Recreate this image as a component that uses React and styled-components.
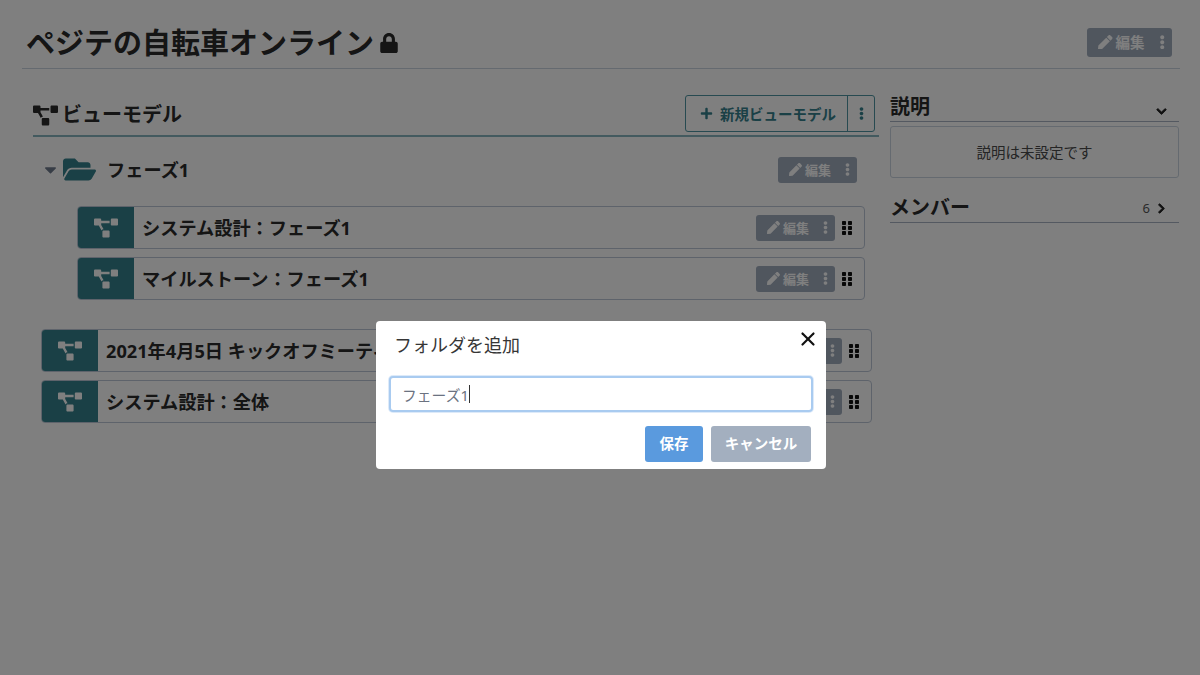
import styled, { createGlobalStyle } from 'styled-components';
import {
    FaProjectDiagram, FaLock, FaPen, FaEllipsisV, FaPlus, FaFolderOpen,
    FaCaretDown, FaGripVertical, FaChevronDown, FaChevronRight,
} from 'react-icons/fa';
import { X } from 'lucide-react';

const TEAL = '#34808c';
const TEAL_LINE = '#4f95a2';
const GRAY = '#a0acbd';

const GlobalStyle = createGlobalStyle`
    html, body {
        margin: 0;
        height: 100%;
        background: #fff;
    }
    body {
        font-family: "Noto Sans", "Noto Sans CJK JP", sans-serif;
        color: #363636;
    }
    * {
        box-sizing: border-box;
    }
`

const Page = styled.div`
    width: 1200px;
    height: 675px;
    padding: 0 20px 0 22px;
    overflow: hidden;
`

const Header = styled.header`
    height: 69px;
    display: flex;
    align-items: center;
    justify-content: space-between;
    padding: 16px 8px 0 4px;
    border-bottom: 1px solid #cbd5e0;
`

const Title = styled.h1`
    margin: 1px 0 0;
    display: flex;
    align-items: center;
    gap: 5px;
    font-size: 29px;
    font-weight: 700;
    line-height: 40px;
    color: #2a2a2a;
    svg {
        font-size: 20px;
        margin-top: 1px;
    }
`

const EditButton = styled.div`
    width: ${props => props.$width}px;
    height: ${props => props.$height}px;
    flex: none;
    display: flex;
    align-items: center;
    padding: 0 3px 0 11px;
    background: ${GRAY};
    border-radius: 3px;
    color: #fff;
    font-size: ${props => props.$size}px;
    font-weight: 700;
    span {
        margin-left: 3px;
        flex: 1;
        padding-bottom: 1px;
    }
    svg {
        font-size: ${props => props.$size}px;
    }
`

const Columns = styled.div`
    display: grid;
    grid-template-columns: 857px 289px;
    gap: 0 11px;
    padding: 26px 0 0 0;
`

const LeftColumn = styled.section`
    padding-left: 11px;
`

const SectionHead = styled.div`
    height: 42px;
    display: flex;
    align-items: flex-start;
    justify-content: space-between;
    padding-right: 4px;
    border-bottom: 2px solid #86b5bf;
`

const SectionTitle = styled.h2`
    margin: 0;
    display: flex;
    align-items: center;
    gap: 4px;
    font-size: 20px;
    font-weight: 700;
    line-height: 40px;
    color: #2a2a2a;
    svg {
        font-size: 25px;
    }
`

const NewButton = styled.div`
    width: 190px;
    height: 37px;
    display: flex;
    border: 1px solid ${TEAL_LINE};
    border-radius: 3px;
    color: ${TEAL};
    font-size: 14.5px;
    font-weight: 700;
`

const NewLabel = styled.div`
    flex: 1;
    display: flex;
    align-items: center;
    gap: 7px;
    padding-left: 14px;
    border-right: 1px solid ${TEAL_LINE};
    svg {
        font-size: 13px;
    }
`

const NewMenu = styled.div`
    width: 26px;
    display: flex;
    align-items: center;
    justify-content: center;
    font-size: 13px;
`

const FolderRow = styled.div`
    height: 27px;
    margin: 19px 22px 0 8px;
    display: flex;
    align-items: center;
`

const Caret = styled(FaCaretDown)`
    font-size: 19px;
    color: #6f7a8c;
    margin-right: 3px;
`

const FolderIcon = styled(FaFolderOpen)`
    font-size: 33px;
    color: ${TEAL};
    margin-right: 11px;
`

const FolderName = styled.div`
    flex: 1;
    font-size: 18.2px;
    font-weight: 700;
    color: #2a2a2a;
    padding-bottom: 2px;
`

const ModelList = styled.div`
    display: flex;
    flex-direction: column;
    gap: 8px;
    margin: ${props => props.$top}px ${props => props.$right}px 0 ${props => props.$left}px;
`

const ModelCard = styled.div`
    height: 43px;
    display: flex;
    align-items: center;
    border: 1px solid #bcc7d6;
    border-radius: 4px;
    overflow: hidden;
    padding-right: 9px;
`

const ModelBadge = styled.div`
    width: 57px;
    align-self: stretch;
    flex: none;
    margin: -1px 0 -1px -1px;
    display: flex;
    align-items: center;
    justify-content: center;
    background: ${TEAL};
    color: #fff;
    font-size: 24px;
`

const ModelName = styled.div`
    flex: 1;
    padding: 0 0 2px 8px;
    font-size: 18.2px;
    font-weight: 700;
    color: #2a2a2a;
    white-space: nowrap;
`

const Grip = styled(FaGripVertical)`
    margin-left: 4px;
    font-size: 16px;
    color: #111;
`

const RightColumn = styled.aside`
    display: flex;
    flex-direction: column;
`

const SideHead = styled.div`
    height: 27px;
    display: flex;
    align-items: center;
    justify-content: space-between;
    padding-right: 12px;
    border-bottom: 1px solid #a9b3c2;
    svg {
        font-size: 11px;
        color: #222;
        stroke: currentColor;
        stroke-width: 40px;
    }
`

const SideTitle = styled.h3`
    margin: 0;
    padding-bottom: 5px;
    font-size: 20px;
    font-weight: 700;
    color: #2a2a2a;
`

const ToggleIcon = styled(FaChevronDown)`
    margin: 6px 0 0;
`

const SideCount = styled.div`
    display: flex;
    align-items: center;
    gap: 6px;
    padding-bottom: 2px;
    font-size: 13px;
    color: #555;
`

const DescriptionBox = styled.div`
    height: 52px;
    margin: 4px 0 18px;
    padding-bottom: 2px;
    display: flex;
    align-items: center;
    justify-content: center;
    border: 1px solid #cbd5e0;
    border-radius: 3px;
    font-size: 14.5px;
    color: #4a4a4a;
`

const Overlay = styled.div`
    position: fixed;
    inset: 0;
    display: flex;
    justify-content: center;
    align-items: flex-start;
    padding: 321px 0 0 2px;
    background: rgba(0, 0, 0, 0.5);
`

const Dialog = styled.div`
    position: relative;
    width: 450px;
    height: 148px;
    padding: 12px 13px 0 13px;
    background: #fff;
    border-radius: 4px;
`

const DialogTitle = styled.h4`
    margin: 0 0 18px 5px;
    font-size: 18px;
    font-weight: 400;
    line-height: 25px;
    color: #363636;
`

const CloseButton = styled.div`
    position: absolute;
    top: 7px;
    right: 7px;
    display: flex;
    color: #111;
`

const InputWrap = styled.div`
    position: relative;
    width: 424px;
`

const NameInput = styled.input`
    display: block;
    width: 100%;
    height: 36px;
    padding: 0 11px;
    border: 2px solid #a9cbf0;
    border-radius: 4px;
    box-shadow: 0 0 0 1px rgba(169, 203, 240, 0.4);
    outline: none;
    font-family: inherit;
    font-size: 14.8px;
    color: #6b7280;
    caret-color: transparent;
`

const TextCursor = styled.span`
    position: absolute;
    top: 9px;
    left: 80px;
    width: 1px;
    height: 18px;
    background: #333;
`

const Actions = styled.div`
    display: flex;
    justify-content: flex-end;
    gap: 8px;
    margin: 14px 2px 0 0;
`

const ActionButton = styled.button`
    width: ${props => props.$width}px;
    height: 36px;
    padding: 0 0 3px;
    border: none;
    border-radius: 3px;
    background: ${props => props.$bg};
    color: #fff;
    font-family: inherit;
    font-size: 14.5px;
    font-weight: 700;
`

const Edit = ({ width = 79, height = 26, size = 13 }) => (
    <EditButton $width={width} $height={height} $size={size}>
        <FaPen />
        <span>編集</span>
        <FaEllipsisV />
    </EditButton>
)

const Model = ({ name }) => (
    <ModelCard>
        <ModelBadge><FaProjectDiagram /></ModelBadge>
        <ModelName>{name}</ModelName>
        <Edit />
        <Grip />
    </ModelCard>
)

const App = () => {
    return (
        <>
            <GlobalStyle />
            <Page>
                <Header>
                    <Title>ペジテの自転車オンライン<FaLock /></Title>
                    <Edit width={85} height={29} size={14.5} />
                </Header>
                <Columns>
                    <LeftColumn>
                        <SectionHead>
                            <SectionTitle><FaProjectDiagram />ビューモデル</SectionTitle>
                            <NewButton>
                                <NewLabel><FaPlus />新規ビューモデル</NewLabel>
                                <NewMenu><FaEllipsisV /></NewMenu>
                            </NewButton>
                        </SectionHead>
                        <FolderRow>
                            <Caret />
                            <FolderIcon />
                            <FolderName>フェーズ1</FolderName>
                            <Edit />
                        </FolderRow>
                        <ModelList $top={23} $right={14} $left={44}>
                            <Model name="システム設計：フェーズ1" />
                            <Model name="マイルストーン：フェーズ1" />
                        </ModelList>
                        <ModelList $top={29} $right={7} $left={8}>
                            <Model name="2021年4月5日 キックオフミーティング" />
                            <Model name="システム設計：全体" />
                        </ModelList>
                    </LeftColumn>
                    <RightColumn>
                        <SideHead>
                            <SideTitle>説明</SideTitle>
                            <ToggleIcon />
                        </SideHead>
                        <DescriptionBox>説明は未設定です</DescriptionBox>
                        <SideHead>
                            <SideTitle>メンバー</SideTitle>
                            <SideCount>6<FaChevronRight /></SideCount>
                        </SideHead>
                    </RightColumn>
                </Columns>
            </Page>
            <Overlay>
                <Dialog>
                    <DialogTitle>フォルダを追加</DialogTitle>
                    <CloseButton><X size={22} strokeWidth={2.4} /></CloseButton>
                    <InputWrap>
                        <NameInput defaultValue="フェーズ1" />
                        <TextCursor />
                    </InputWrap>
                    <Actions>
                        <ActionButton $width={58} $bg="#5a9ade">保存</ActionButton>
                        <ActionButton $width={100} $bg="#a3afbf">キャンセル</ActionButton>
                    </Actions>
                </Dialog>
            </Overlay>
        </>
    )
}

export default App;
